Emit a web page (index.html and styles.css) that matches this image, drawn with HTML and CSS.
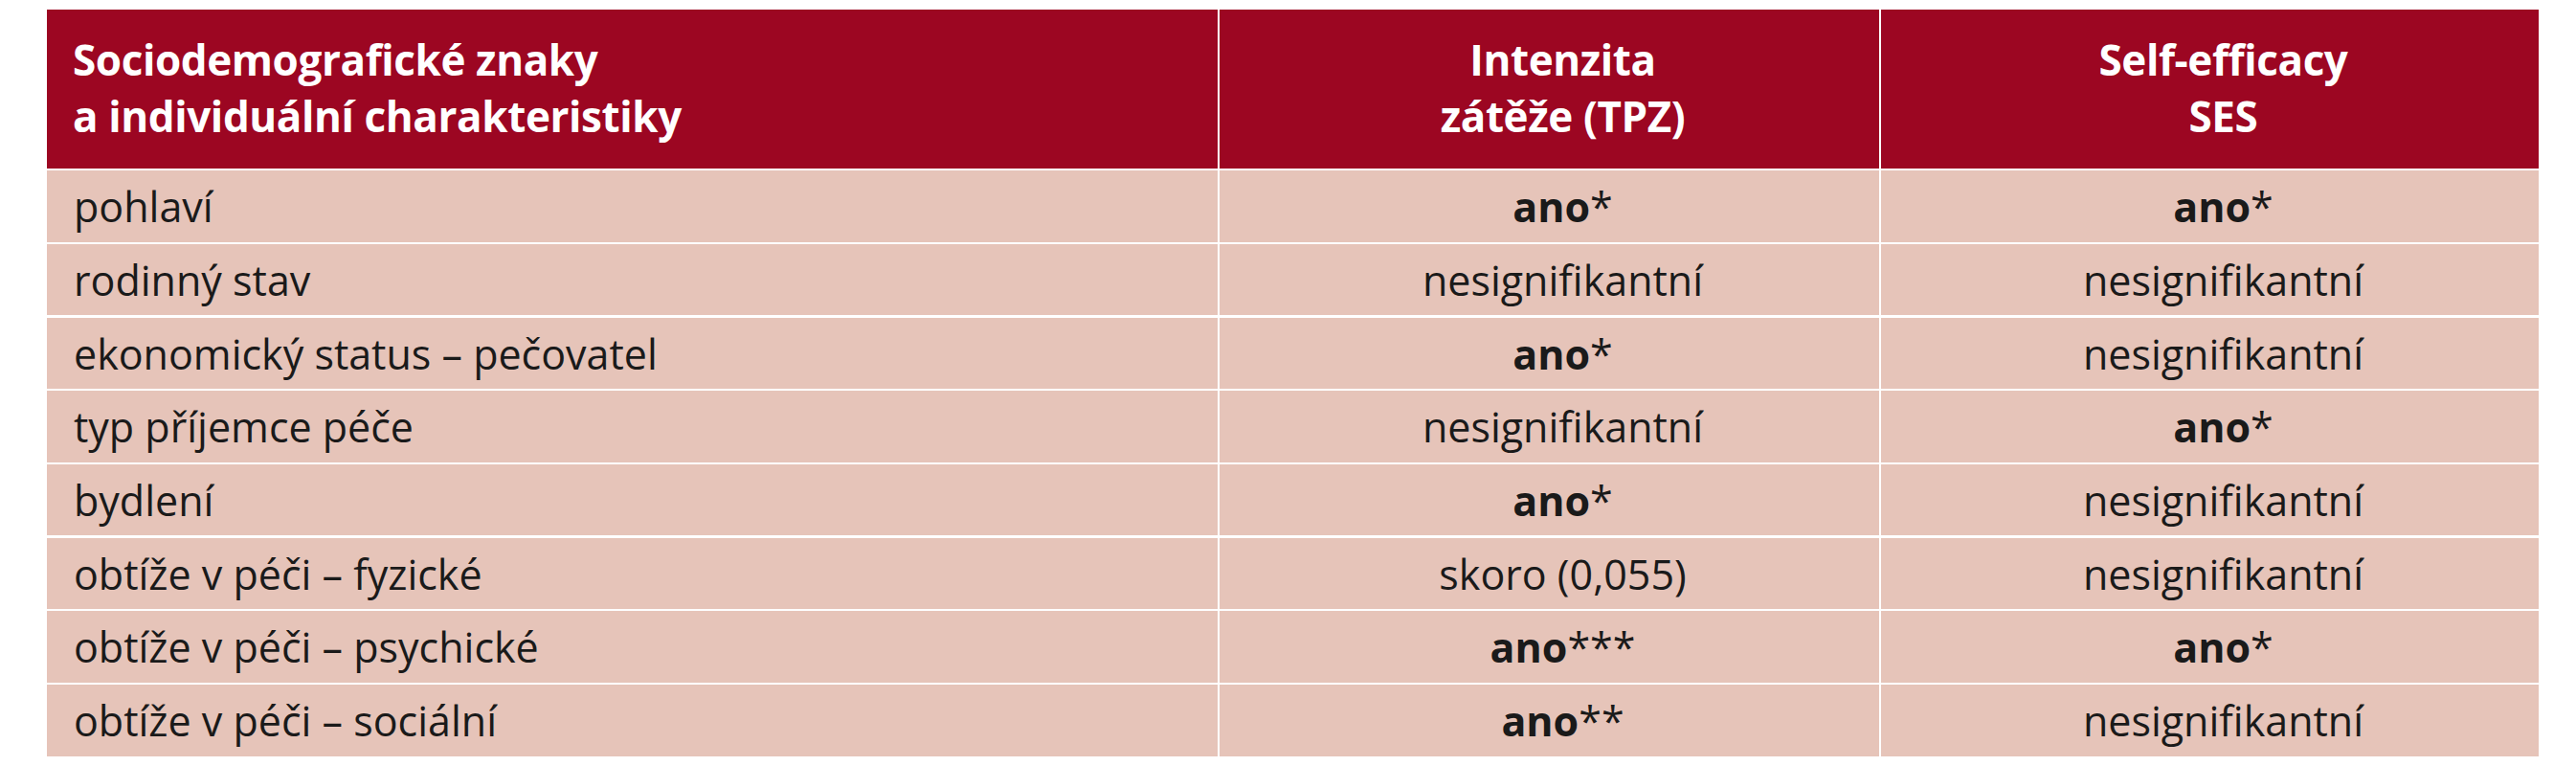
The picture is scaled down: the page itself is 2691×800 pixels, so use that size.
FILE: index.html
```html
<!DOCTYPE html>
<html lang="cs">
<head>
<meta charset="utf-8">
<title>Tabulka</title>
<link rel="stylesheet" href="styles.css">
</head>
<body>
<div class="table">
  <div class="th first">Sociodemografické znaky<br>a individuální charakteristiky</div>
  <div class="th">Intenzita<br>zátěže (TPZ)</div>
  <div class="th">Self-efficacy<br>SES</div>

  <div class="td first">pohlaví</div>
  <div class="td"><b>ano</b>*</div>
  <div class="td"><b>ano</b>*</div>

  <div class="td first">rodinný stav</div>
  <div class="td">nesignifikantní</div>
  <div class="td">nesignifikantní</div>

  <div class="td first">ekonomický status – pečovatel</div>
  <div class="td"><b>ano</b>*</div>
  <div class="td">nesignifikantní</div>

  <div class="td first">typ příjemce péče</div>
  <div class="td">nesignifikantní</div>
  <div class="td"><b>ano</b>*</div>

  <div class="td first">bydlení</div>
  <div class="td"><b>ano</b>*</div>
  <div class="td">nesignifikantní</div>

  <div class="td first">obtíže v péči – fyzické</div>
  <div class="td">skoro (0,055)</div>
  <div class="td">nesignifikantní</div>

  <div class="td first">obtíže v péči – psychické</div>
  <div class="td"><b>ano</b>***</div>
  <div class="td"><b>ano</b>*</div>

  <div class="td first">obtíže v péči – sociální</div>
  <div class="td"><b>ano</b>**</div>
  <div class="td">nesignifikantní</div>
</div>
</body>
</html>
```

FILE: styles.css
```css
html, body {
  margin: 0;
  padding: 0;
  background: #ffffff;
}
body {
  padding: 10px 0 0 49px;
  font-family: "Open Sans", "Noto Sans", sans-serif;
  color: #1a1a1a;
}
.table {
  width: 2603px;
  display: grid;
  grid-template-columns: 1223px 689px 687px;
  grid-template-rows: 166px repeat(8, 74.4px);
  column-gap: 2px;
  row-gap: 2.3px;
}
.th {
  background: #9c0622;
  color: #ffffff;
  font-weight: 700;
  font-size: 44px;
  line-height: 59px;
  letter-spacing: -0.4px;
  text-align: center;
  display: flex;
  align-items: center;
  justify-content: center;
  padding-left: 28px;
  padding-bottom: 2px;
  box-sizing: border-box;
}
.th.last {
  padding-left: 40px;
}
.th.first {
  justify-content: flex-start;
  text-align: left;
  padding-left: 27px;
}
.td {
  background: #e6c4b9;
  font-size: 43px;
  line-height: 50px;
  padding-top: 13px;
  padding-left: 28px;
  text-align: center;
  box-sizing: border-box;
}
.td.first {
  text-align: left;
  padding-left: 28px;
}
.td b {
  font-weight: 700;
}
```
